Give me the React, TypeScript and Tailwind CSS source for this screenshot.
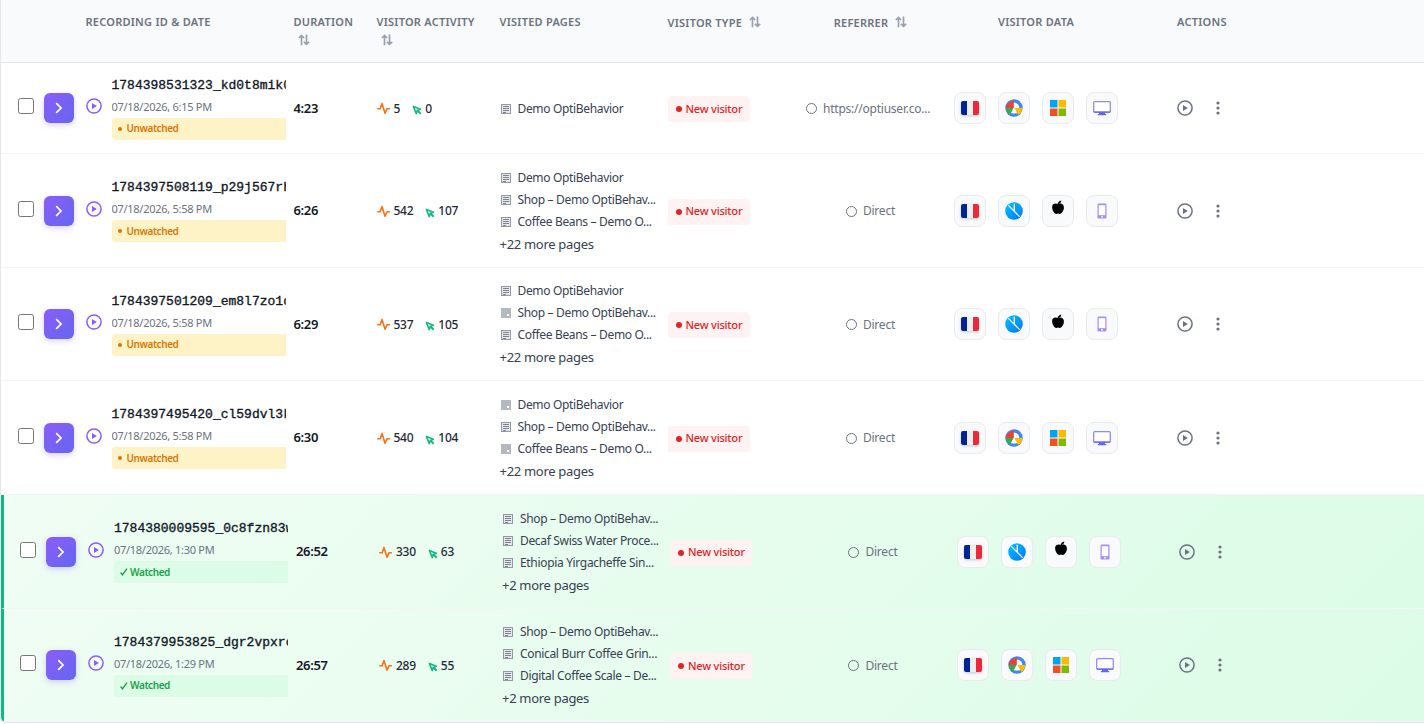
import { clsx } from 'clsx'

type Recording = {
  id: string
  date: string
  watched?: boolean
  duration: string
  events: number
  clicks: number
  pages: { title: string; blank?: boolean }[]
  more?: number
  referrer: string
  mobile?: boolean
  height: string
}

const recordings: Recording[] = [
  {
    id: '1784398531323_kd0t8mik0q',
    date: '07/18/2026, 6:15 PM',
    duration: '4:23',
    events: 5,
    clicks: 0,
    pages: [{ title: 'Demo OptiBehavior' }],
    referrer: 'https://optiuser.co...',
    height: 'h-[91px]',
  },
  {
    id: '1784397508119_p29j567rhw',
    date: '07/18/2026, 5:58 PM',
    duration: '6:26',
    events: 542,
    clicks: 107,
    pages: [
      { title: 'Demo OptiBehavior' },
      { title: 'Shop – Demo OptiBehav...' },
      { title: 'Coffee Beans – Demo O...' },
    ],
    more: 22,
    referrer: 'Direct',
    mobile: true,
    height: 'h-[114px]',
  },
  {
    id: '1784397501209_em8l7zo1cx',
    date: '07/18/2026, 5:58 PM',
    duration: '6:29',
    events: 537,
    clicks: 105,
    pages: [
      { title: 'Demo OptiBehavior' },
      { title: 'Shop – Demo OptiBehav...', blank: true },
      { title: 'Coffee Beans – Demo O...' },
    ],
    more: 22,
    referrer: 'Direct',
    mobile: true,
    height: 'h-[113px]',
  },
  {
    id: '1784397495420_cl59dvl3ke',
    date: '07/18/2026, 5:58 PM',
    duration: '6:30',
    events: 540,
    clicks: 104,
    pages: [
      { title: 'Demo OptiBehavior', blank: true },
      { title: 'Shop – Demo OptiBehav...' },
      { title: 'Coffee Beans – Demo O...', blank: true },
    ],
    more: 22,
    referrer: 'Direct',
    height: 'h-[114px]',
  },
  {
    id: '1784380009595_0c8fzn83wa',
    date: '07/18/2026, 1:30 PM',
    watched: true,
    duration: '26:52',
    events: 330,
    clicks: 63,
    pages: [
      { title: 'Shop – Demo OptiBehav...' },
      { title: 'Decaf Swiss Water Proce...' },
      { title: 'Ethiopia Yirgacheffe Sin...' },
    ],
    more: 2,
    referrer: 'Direct',
    mobile: true,
    height: 'h-[114px]',
  },
  {
    id: '1784379953825_dgr2vpxrcn',
    date: '07/18/2026, 1:29 PM',
    watched: true,
    duration: '26:57',
    events: 289,
    clicks: 55,
    pages: [
      { title: 'Shop – Demo OptiBehav...' },
      { title: 'Conical Burr Coffee Grin...' },
      { title: 'Digital Coffee Scale – De...' },
    ],
    more: 2,
    referrer: 'Direct',
    height: 'h-[113px]',
  },
]

const columns = 'grid grid-cols-[42.5px_41px_209px_83px_123px_168px_126.5px_153px_178px_1fr]'

function SortIcon({ className }: { className?: string }) {
  return (
    <svg className={clsx('h-3 w-3 text-gray-400', className)} viewBox="0 0 12 12" fill="none" stroke="currentColor" strokeWidth="1.7">
      <path d="M3.5 11.2V1.8M.9 4l2.6-2.6L6.1 4M8.5 .6V10M5.9 7.8l2.6 2.6 2.6-2.6" />
    </svg>
  )
}

function PlayIcon({ className }: { className: string }) {
  return (
    <svg className={clsx('h-4 w-4 shrink-0', className)} viewBox="0 0 16 16">
      <circle cx="8" cy="8" r="7.1" fill="none" stroke="currentColor" strokeWidth="1.5" />
      <path d="M6 5.1v5.8L10.9 8z" fill="currentColor" />
    </svg>
  )
}

function PulseIcon() {
  return (
    <svg className="h-[13px] w-[13px] shrink-0" viewBox="0 0 13 13" fill="none" stroke="#f97316" strokeWidth="1.6" strokeLinejoin="round" strokeLinecap="round">
      <path d="M.8 6.8h2.4L5 1.4l3 9.8 2-4.4h2.3" />
    </svg>
  )
}

function ClickIcon() {
  return (
    <svg className="mt-[3px] h-2.5 w-2.5 shrink-0" viewBox="0 0 10 10" fill="none" stroke="#10b981">
      <path d="M1.4 1.4l6.9 2.9-3 1.2-1 3.1z" strokeWidth="1.6" strokeLinejoin="round" />
      <path d="M5.3 5.4l3.4 3.4" strokeWidth="2" />
    </svg>
  )
}

function PageIcon({ blank }: { blank?: boolean }) {
  if (blank) {
    return (
      <svg className="h-2.5 w-2.5 shrink-0" viewBox="0 0 10 10" shapeRendering="crispEdges">
        <path d="M0 0h10v10H0z" fill="#b4b8c1" />
        <path d="M6 6h2v2H6z" fill="#fff" />
      </svg>
    )
  }
  return (
    <svg className="h-2.5 w-2.5 shrink-0" viewBox="0 0 10 10" shapeRendering="crispEdges">
      <path d="M.5 .5h9v9h-9z" fill="#e5e7eb" stroke="#9298a4" />
      <path d="M2 2h6v1H2zM2 4h6v1H2zM2 6h6v1H2zM2 8h3v1H2z" fill="#7b8290" />
    </svg>
  )
}

function FlagIcon() {
  return (
    <div className="flex h-3.5 w-[18px] overflow-hidden rounded-[2px] shadow-[0_1px_3px_rgba(0,0,0,0.2)]">
      <span className="flex-1 bg-[#002395]" />
      <span className="flex-1 bg-[#eeeeee]" />
      <span className="flex-1 bg-[#ed2939]" />
    </div>
  )
}

function ChromeIcon() {
  return (
    <svg className="h-[18px] w-[18px]" viewBox="0 0 18 18">
      <circle cx="9" cy="9" r="8.7" fill="#4285f4" />
      <circle cx="9" cy="9" r="5.4" fill="#fff" />
      <path d="M8.8 1v8H.7C1 6.6 2 5 3.4 4z" fill="#ea4335" />
      <path d="M.7 9h8.1l-4 7C2.2 14.6.7 12 .7 9z" fill="#34a853" />
      <path d="M9.2 9h8.1c0 3-1.5 5.6-4.1 7z" fill="#fbbc05" />
      <path d="M9 8.6l3 5.6H6z" fill="#fff" />
    </svg>
  )
}

function SafariIcon() {
  return (
    <svg className="h-[18px] w-[18px]" viewBox="0 0 18 18">
      <defs>
        <linearGradient id="safari" x1="0" y1="0" x2="1" y2="1">
          <stop offset="0" stopColor="#00c6ff" />
          <stop offset="1" stopColor="#0072ff" />
        </linearGradient>
      </defs>
      <circle cx="9" cy="9" r="8.8" fill="url(#safari)" />
      <path d="M9.3 1.8v6.9M3.4 3.4l11.2 11.2" stroke="#fff" strokeWidth="1.3" fill="none" />
    </svg>
  )
}

function WindowsIcon() {
  return (
    <svg className="h-4 w-4" viewBox="0 0 16 16">
      <path d="M0 0h7.5v7.5H0z" fill="#00a4ef" />
      <path d="M8.5 0H16v7.5H8.5z" fill="#ffb900" />
      <path d="M0 8.5h7.5V16H0z" fill="#f25022" />
      <path d="M8.5 8.5H16V16H8.5z" fill="#7fba00" />
    </svg>
  )
}

function AppleIcon() {
  return (
    <svg className="-mt-1.5 h-[15px] w-3" viewBox="0 0 12 15">
      <path d="M6 4.2C4.6 3.1.2 2.8.1 7c0 3 2 6.9 4.2 6.9.7 0 1-.3 1.7-.3s1 .3 1.8.3c2.1 0 4.1-3.8 4.1-6.2 0-4.8-4.4-4.7-5.9-3.5z" />
      <path d="M5.4 4.4C5.6 2.5 7 .9 9.3.4 9.3 2 8 3.8 5.4 4.4z" />
    </svg>
  )
}

function DesktopIcon() {
  return (
    <svg className="mt-px h-[15px] w-[18px]" viewBox="0 0 18 15">
      <rect x=".7" y=".7" width="16.6" height="10.4" rx="1" fill="#fff" stroke="#8f8cf5" strokeWidth="1.3" />
      <path d="M.6 10.4h16.8v.6a.8.8 0 0 1-.8.8H1.4a.8.8 0 0 1-.8-.8zM6 11.6h6v1.5H6zM4.8 13h8.4v1.3H4.8z" fill="#6366f1" />
    </svg>
  )
}

function PhoneIcon() {
  return (
    <svg className="h-4 w-2.5" viewBox="0 0 10 16">
      <rect x=".5" y=".5" width="9" height="15" rx="1.3" fill="#a78bfa" />
      <path d="M1.7 2.2h6.6v10H1.7z" fill="#fff" />
      <circle cx="5" cy="13.8" r=".9" fill="#fff" />
    </svg>
  )
}

function Tile({ children }: { children: React.ReactNode }) {
  return (
    <div className="flex h-8 w-8 items-center justify-center rounded-lg border border-[#e9ebef] bg-[#f9fafb]">
      {children}
    </div>
  )
}

function Header() {
  const label = 'text-[11px] leading-[18px] font-semibold tracking-[0.25px] whitespace-nowrap text-[#6b7280]'
  return (
    <div className={clsx(columns, 'h-[63px] border-b border-[#e5e7eb] bg-[#f9fafb] pt-[13px]', label)}>
      <div />
      <div />
      <div className="pl-px">RECORDING ID &amp; DATE</div>
      <div>
        DURATION
        <SortIcon className="mt-[3px] ml-1" />
      </div>
      <div>
        VISITOR ACTIVITY
        <SortIcon className="mt-[3px] ml-1" />
      </div>
      <div>VISITED PAGES</div>
      <div className="flex gap-[7px] pt-px">
        VISITOR TYPE
        <SortIcon className="mt-0.5" />
      </div>
      <div className="flex justify-center gap-[7px] pt-px">
        REFERRER
        <SortIcon className="mt-0.5" />
      </div>
      <div className="text-center">VISITOR DATA</div>
      <div className="pl-[52px]">ACTIONS</div>
    </div>
  )
}

function Row({ rec }: { rec: Recording }) {
  return (
    <div
      className={clsx(
        'border-b border-[#f3f4f6]',
        rec.height,
        rec.watched && 'border-l-[3px] border-l-[#10b981] bg-linear-135 from-[#f0fdf4] to-[#dcfce7]',
      )}
    >
      <div className={clsx(columns, 'h-full items-center', rec.watched && '-ml-[0.5px]')}>
        <div className="pl-[16.5px]">
          <div className="mb-1 h-4 w-4 rounded-[2.5px] border border-[#767676] bg-white" />
        </div>
        <div>
          <button className="flex h-[30px] w-[30px] items-center justify-center rounded-md bg-linear-135 from-[#8b5cf6] to-[#6366f1] shadow-[0_2px_6px_rgba(139,92,246,0.3)]">
            <svg className="h-3 w-2" viewBox="0 0 8 12" fill="none" stroke="#fff" strokeWidth="1.7">
              <path d="M1.2 1.2L6 6l-4.8 4.8" />
            </svg>
          </button>
        </div>
        <div className="flex items-center gap-2.5 overflow-hidden pl-px">
          <PlayIcon className="mb-1 text-[#8b5cf6]" />
          <div className="mr-2 min-w-0 flex-1 overflow-hidden">
            <div className="font-['Liberation_Mono',monospace] text-[13px] leading-[18px] whitespace-nowrap text-[#111827] [-webkit-text-stroke:0.35px_#111827]">
              {rec.id}
            </div>
            <div className="pt-[3px] pb-px text-[11px] leading-[17px] tracking-[-0.28px] text-[#6b7280]">{rec.date}</div>
            <div
              className={clsx(
                'mt-0.5 flex h-[22px] w-[190px] items-center rounded-[3px] px-1.5 text-[10px] font-semibold tracking-[-0.4px]',
                rec.watched ? 'bg-[#dcfce7] text-[#16a34a]' : 'bg-[#fef3c7] text-[#d97706]',
              )}
            >
              {rec.watched ? (
                <svg className="mr-0.5 h-2 w-2" viewBox="0 0 8 8" fill="none" stroke="currentColor" strokeWidth="1.4">
                  <path d="M.6 4.6l1.8 2.2L7 .6" />
                </svg>
              ) : (
                <span className="mr-[5px] h-1 w-1 rounded-full bg-current" />
              )}
              {rec.watched ? 'Watched' : 'Unwatched'}
            </div>
          </div>
        </div>
        <div className="pt-px text-[13px] font-semibold tracking-[-0.35px] text-[#111827]">{rec.duration}</div>
        <div className="flex items-center pt-px text-xs font-medium tracking-[-0.25px] text-[#1f2937]">
          <PulseIcon />
          <span className="ml-1">{rec.events}</span>
          <span className="ml-3">
            <ClickIcon />
          </span>
          <span className="ml-[3px]">{rec.clicks}</span>
        </div>
        <div className="pt-[1.5px] text-xs text-[#374151]">
          {rec.pages.map((page) => (
            <div key={page.title} className="flex h-[22px] items-center gap-[7px] pl-px tracking-[-0.33px] whitespace-nowrap">
              <PageIcon blank={page.blank} />
              {page.title}
            </div>
          ))}
          {rec.more && <div className="h-[23px] text-[13px] leading-[23px] tracking-[-0.3px]">+{rec.more} more pages</div>}
        </div>
        <div>
          <div className="inline-flex h-[26px] w-[82px] items-center rounded bg-[#fef2f2] pl-2 text-[11px] font-medium tracking-[-0.2px] whitespace-nowrap text-[#dc2626]">
            <span className="mr-1 h-1.5 w-1.5 rounded-full bg-[#dc2626]" />
            New visitor
          </div>
        </div>
        <div
          className={clsx(
            'flex items-center gap-1.5 pt-px text-xs tracking-[-0.23px] whitespace-nowrap text-[#6b7280]',
            rec.referrer === 'Direct' ? 'justify-center' : 'pl-3',
          )}
        >
          <span className="h-[11px] w-[11px] rounded-full border border-[#6b7280]" />
          {rec.referrer}
        </div>
        <div className="flex justify-center gap-3">
          <Tile>
            <FlagIcon />
          </Tile>
          <Tile>{rec.mobile ? <SafariIcon /> : <ChromeIcon />}</Tile>
          <Tile>{rec.mobile ? <AppleIcon /> : <WindowsIcon />}</Tile>
          <Tile>{rec.mobile ? <PhoneIcon /> : <DesktopIcon />}</Tile>
        </div>
        <div className="flex items-center gap-[23px] pl-[51.5px] text-[#6b7280]">
          <PlayIcon className="text-[#6b7280]" />
          <svg className="h-3.5 w-1" viewBox="0 0 4 14" fill="currentColor">
            <circle cx="2" cy="2" r="1.6" />
            <circle cx="2" cy="7" r="1.6" />
            <circle cx="2" cy="12" r="1.6" />
          </svg>
        </div>
      </div>
    </div>
  )
}

export default function App() {
  return (
    <div className="h-[724px] w-[1424px] overflow-hidden bg-white font-['Noto_Sans','Open_Sans',sans-serif]">
      <div className="h-[723px] overflow-hidden rounded-bl-md border-b border-l border-[#e5e7eb]">
        <Header />
        {recordings.map((rec) => (
          <Row key={rec.id} rec={rec} />
        ))}
      </div>
    </div>
  )
}
